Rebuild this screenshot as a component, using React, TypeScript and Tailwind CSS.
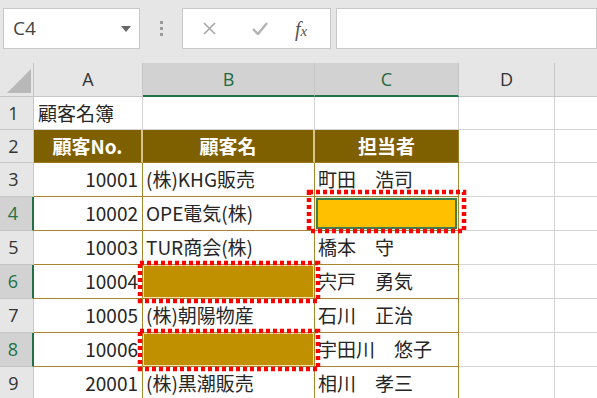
const COLS = "grid-cols-[34px_109px_172px_144px_96px_1fr]";

type Row = {
  n: number;
  id: string;
  name: string;
  rep: string;
};

const rows: Row[] = [
  { n: 3, id: "10001", name: "(株)KHG販売", rep: "町田　浩司" },
  { n: 4, id: "10002", name: "OPE電気(株)", rep: "" },
  { n: 5, id: "10003", name: "TUR商会(株)", rep: "橋本　守" },
  { n: 6, id: "10004", name: "", rep: "宍戸　勇気" },
  { n: 7, id: "10005", name: "(株)朝陽物産", rep: "石川　正治" },
  { n: 8, id: "10006", name: "", rep: "宇田川　悠子" },
  { n: 9, id: "20001", name: "(株)黒潮販売", rep: "相川　孝三" },
];

const selectedRows = [4, 6, 8];

function RowHead({ n, h }: { n: number; h: string }) {
  const sel = selectedRows.includes(n);
  return (
    <div
      className={
        sel
          ? `${h} flex items-center justify-center pr-[6px] bg-[#d2d2d2] text-[#217346] text-[18px] font-['Open_Sans',sans-serif] border-b border-[#c6c6c6] border-r-2 border-r-[#217346]`
          : `${h} flex items-center justify-center pr-[6px] bg-[#e6e6e6] text-[#333] text-[18px] font-['Open_Sans',sans-serif] border-b border-r border-[#c6c6c6]`
      }
    >
      {n}
    </div>
  );
}

export default function App() {
  return (
    <div className="relative w-[597px] h-[398px] overflow-hidden bg-[#e6e6e6] font-['Noto_Sans_CJK_JP',sans-serif] text-[#262626]">
      {/* formula bar */}
      <div className="h-[63px] flex items-start pt-[8px]">
        <div className="ml-[3px] w-[137px] h-[41px] bg-white border border-[#c8c8c8] flex items-center justify-between pl-[9px] pr-[8px]">
          <span className="text-[19px] text-[#444] font-['Open_Sans',sans-serif]">C4</span>
          <svg width="10" height="6" viewBox="0 0 10 6">
            <path d="M0 0 L10 0 L5 6 Z" fill="#666" />
          </svg>
        </div>
        <div className="w-[42px] h-[41px] flex flex-col items-center justify-center gap-[3px]">
          <span className="w-[3px] h-[3px] bg-[#9a9a9a]" />
          <span className="w-[3px] h-[3px] bg-[#9a9a9a]" />
          <span className="w-[3px] h-[3px] bg-[#9a9a9a]" />
        </div>
        <div className="w-[149px] h-[41px] bg-white border border-[#c8c8c8] flex items-center">
          <svg className="ml-[20px]" width="13" height="13" viewBox="0 0 13 13">
            <path d="M1 1 L12 12 M12 1 L1 12" stroke="#a6a6a6" strokeWidth="1.6" />
          </svg>
          <svg className="ml-[36px]" width="16" height="13" viewBox="0 0 16 13">
            <path d="M1 7 L6 12 L15 1" stroke="#b4b4b4" strokeWidth="2.4" fill="none" />
          </svg>
          <span className="ml-[27px] italic text-[20px] text-[#555] font-['Liberation_Serif',serif] leading-none">
            f<span className="text-[15px]">x</span>
          </span>
        </div>
        <div className="ml-[5px] flex-1 h-[41px] bg-white border border-[#c8c8c8]" />
      </div>

      {/* column headers */}
      <div className={`grid ${COLS} h-[34px] text-[18px] font-['Open_Sans',sans-serif]`}>
        <div className="relative bg-[#e6e6e6] border-r border-b border-[#c6c6c6]">
          <svg className="absolute left-[7px] top-[6px]" width="24" height="24" viewBox="0 0 24 24">
            <path d="M24 0 L24 24 L0 24 Z" fill="#b8b8b8" />
          </svg>
        </div>
        <div className="flex items-center justify-center bg-[#e6e6e6] border-r border-b border-[#c6c6c6] text-[#333]">A</div>
        <div className="flex items-center justify-center bg-[#d2d2d2] border-r border-[#c6c6c6] border-b-2 border-b-[#217346] text-[#1f6b42]">B</div>
        <div className="flex items-center justify-center bg-[#d2d2d2] border-r border-[#c6c6c6] border-b-2 border-b-[#217346] text-[#1f6b42]">C</div>
        <div className="flex items-center justify-center bg-[#e6e6e6] border-r border-b border-[#c6c6c6] text-[#333]">D</div>
        <div className="bg-[#e6e6e6] border-b border-[#c6c6c6]" />
      </div>

      {/* row 1 */}
      <div className={`grid ${COLS} h-[33px] text-[19px]`}>
        <RowHead n={1} h="h-[33px]" />
        <div className="bg-white border-r border-b border-[#d4d4d4] flex items-center pl-[4px] whitespace-nowrap">顧客名簿</div>
        <div className="bg-white border-r border-b border-[#d4d4d4]" />
        <div className="bg-white border-r border-b border-[#d4d4d4]" />
        <div className="bg-white border-r border-b border-[#d4d4d4]" />
        <div className="bg-white border-b border-[#d4d4d4]" />
      </div>

      {/* row 2 - table header */}
      <div className={`grid ${COLS} h-[33px] text-[19px]`}>
        <RowHead n={2} h="h-[33px]" />
        <div className="bg-[#7f6000] border-r-2 border-r-[#d9c28a] border-b border-b-[#9c7c22] flex items-center justify-center font-bold text-white">顧客No.</div>
        <div className="bg-[#7f6000] border-r-2 border-r-[#d9c28a] border-b border-b-[#9c7c22] flex items-center justify-center font-bold text-white">顧客名</div>
        <div className="bg-[#7f6000] border-r border-r-[#9c7c22] border-b border-b-[#9c7c22] flex items-center justify-center font-bold text-white">担当者</div>
        <div className="bg-white border-r border-b border-[#d4d4d4]" />
        <div className="bg-white border-b border-[#d4d4d4]" />
      </div>

      {/* data rows */}
      {rows.map((r) => (
        <div key={r.n} className={`grid ${COLS} h-[34px] text-[19px]`}>
          <RowHead n={r.n} h="h-[34px]" />
          <div className="bg-white border-r border-b border-[#a5862c] flex items-center justify-end pr-[4px]">{r.id}</div>
          {r.name ? (
            <div className="bg-white border-r border-b border-[#a5862c] flex items-center pl-[3px] whitespace-nowrap">{r.name}</div>
          ) : (
            <div className="bg-[#c09000] border-r border-b border-[#a5862c] shadow-[inset_0_0_0_1px_#f3e2ad]" />
          )}
          {r.rep ? (
            <div className="bg-white border-r border-b border-[#a5862c] flex items-center pl-[3px] whitespace-pre">{r.rep}</div>
          ) : (
            <div className="bg-[#ffc000] border-r border-b border-[#a5862c] shadow-[inset_0_0_0_1px_#e4ece4,inset_0_0_0_3px_#3f7f4f]" />
          )}
          <div className="bg-white border-r border-b border-[#d4d4d4]" />
          <div className="bg-white border-b border-[#d4d4d4]" />
        </div>
      ))}

      {/* red dotted annotations */}
      <svg className="absolute left-0 top-0 pointer-events-none" width="597" height="398" viewBox="0 0 597 398">
        <g fill="none" stroke="#ff0000" strokeWidth="4.5" strokeDasharray="4 3">
          <rect x="309" y="192" width="155" height="39" />
          <rect x="140" y="263" width="178" height="38" />
          <rect x="140" y="331" width="178" height="38" />
        </g>
      </svg>
    </div>
  );
}
